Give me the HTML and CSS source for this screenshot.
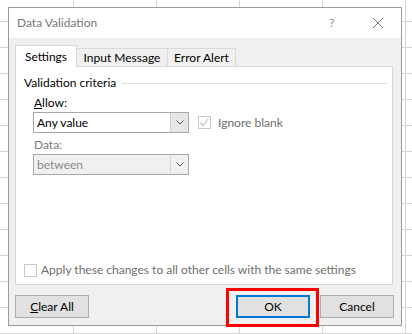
FILE: index.html
```html
<!DOCTYPE html>
<html lang="en">
<head>
    <meta charset="UTF-8">
    <title>Data Validation</title>
    <link rel="stylesheet" href="styles.css">
</head>
<body>
    <div class="dialog">
        <div class="title-bar">
            <span class="title">Data Validation</span>
            <span class="help">?</span>
            <svg class="close" width="12" height="12" viewBox="0 0 12 12">
                <path d="M1 1 L11 11 M11 1 L1 11" stroke="#7a7a7a" stroke-width="1" fill="none"/>
            </svg>
        </div>

        <div class="dialog-body">
            <div class="tabs">
                <div class="tab active">Settings</div>
                <div class="tab tab-input">Input Message</div>
                <div class="tab tab-error">Error Alert</div>
            </div>

            <div class="panel">
                <div class="group-title">
                    <span>Validation criteria</span>
                    <span class="rule"></span>
                </div>

                <div class="field-label"><u>A</u>llow:</div>
                <div class="row">
                    <div class="select">
                        <span class="value">Any value</span>
                        <span class="drop">
                            <svg width="8" height="5" viewBox="0 0 8 5"><path d="M0.5 0.5 L4 4 L7.5 0.5" stroke="#555" fill="none"/></svg>
                        </span>
                    </div>
                    <label class="check disabled">
                        <span class="box">
                            <svg width="11" height="11" viewBox="0 0 11 11"><path d="M1.5 5.5 L4 8.5 L9.5 1.5" stroke="#c4c4c4" stroke-width="1.2" fill="none"/></svg>
                        </span>
                        Ignore blank
                    </label>
                </div>

                <div class="field-label disabled-text">Data:</div>
                <div class="select disabled">
                    <span class="value">between</span>
                    <span class="drop">
                        <svg width="8" height="5" viewBox="0 0 8 5"><path d="M0.5 0.5 L4 4 L7.5 0.5" stroke="#555" fill="none"/></svg>
                    </span>
                </div>

                <div class="spacer"></div>

                <label class="check apply">
                    <span class="box"></span>
                    Apply these changes to all other cells with the same settings
                </label>
            </div>

            <div class="buttons">
                <button class="btn"><u>C</u>lear All</button>
                <div class="right-buttons">
                    <button class="btn default">OK</button>
                    <button class="btn">Cancel</button>
                </div>
            </div>
        </div>

        <div class="highlight"></div>
    </div>
</body>
</html>
```

FILE: styles.css
```css
body {
    margin: 0;
    width: 412px;
    height: 334px;
    overflow: hidden;
    font-family: Lato, "Noto Sans", Arial, sans-serif;
    font-size: 12px;
    line-height: 16px;
    background-color: #fff;
    background-image:
        linear-gradient(to right, #d4d4d4 1px, transparent 1px),
        linear-gradient(to bottom, #d4d4d4 1px, transparent 1px);
    background-size: 83px 26px;
    background-position: 73px 21px;
}

* {
    box-sizing: border-box;
}

.dialog {
    position: relative;
    margin: 7px 0 0 8px;
    width: 394px;
    height: 319px;
    border: 1px solid #9a9a9a;
    background: #f0f0f0;
}

.title-bar {
    height: 30px;
    background: #fff;
    display: flex;
    align-items: center;
    padding-left: 8px;
}

.title {
    color: #777;
    flex: 1;
    font-size: 12px;
}

.help {
    color: #888;
    width: 12px;
    margin-right: 31px;
}

.close {
    margin-right: 17px;
}

.dialog-body {
    padding: 7px 7px 0 6px;
}

.tabs {
    display: flex;
    align-items: flex-end;
    height: 21px;
    position: relative;
    z-index: 1;
}

.tab {
    height: 18px;
    line-height: 18px;
    border: 1px solid #d9d9d9;
    border-bottom: none;
    border-left: none;
    background: #f0f0f0;
    color: #000;
    text-align: center;
}

.tab.active {
    width: 62px;
    height: 22px;
    line-height: 21px;
    background: #fff;
    border-left: 1px solid #d9d9d9;
    margin-bottom: -1px;
}

.tab-input {
    width: 91px;
}

.tab-error {
    width: 68px;
}

.panel {
    width: 378px;
    height: 219px;
    border: 1px solid #d9d9d9;
    background: #fff;
    padding: 8px 0 6px 8px;
    display: flex;
    flex-direction: column;
}

.group-title {
    display: flex;
    align-items: center;
}

.rule {
    flex: 1;
    height: 1px;
    background: #dcdcdc;
    margin: 0 5px 0 6px;
}

.field-label {
    margin: 4px 0 1px 10px;
}

.disabled-text {
    color: #7a7a7a;
}

.row {
    display: flex;
    align-items: center;
}

.select {
    margin-left: 9px;
    width: 156px;
    height: 21px;
    border: 1px solid #a8a8a8;
    background: #fff;
    display: flex;
    align-items: center;
}

.select .value {
    flex: 1;
    padding-left: 3px;
}

.select .drop {
    width: 18px;
    height: 19px;
    background: #e6e6e6;
    border-left: 1px solid #cfcfcf;
    display: flex;
    align-items: center;
    justify-content: center;
}

.select.disabled {
    background: #f0f0f0;
    color: #8a8a8a;
}

.select.disabled .drop {
    background: #f0f0f0;
    border-left: 1px solid #d6d6d6;
}

.check {
    display: flex;
    align-items: center;
    color: #6d6d6d;
}

.check .box {
    width: 13px;
    height: 13px;
    border: 1px solid #c8c8c8;
    background: #fff;
    margin-right: 7px;
    display: flex;
}

.row .check {
    margin-left: 9px;
}

.spacer {
    flex: 1;
}

.apply .box {
    margin-right: 4px;
}

.buttons {
    display: flex;
    justify-content: space-between;
    margin-top: 10px;
}

.btn {
    font-family: Lato, "Noto Sans", Arial, sans-serif;
    font-size: 12px;
    width: 74px;
    height: 23px;
    padding: 0;
    border: 1px solid #adadad;
    background: #e1e1e1;
    color: #000;
}

.right-buttons {
    display: flex;
    gap: 10px;
}

.btn.default {
    border: 2px solid #0078d7;
}

.highlight {
    position: absolute;
    left: 217px;
    top: 280px;
    width: 93px;
    height: 39px;
    border: 3px solid #f00;
}
```
